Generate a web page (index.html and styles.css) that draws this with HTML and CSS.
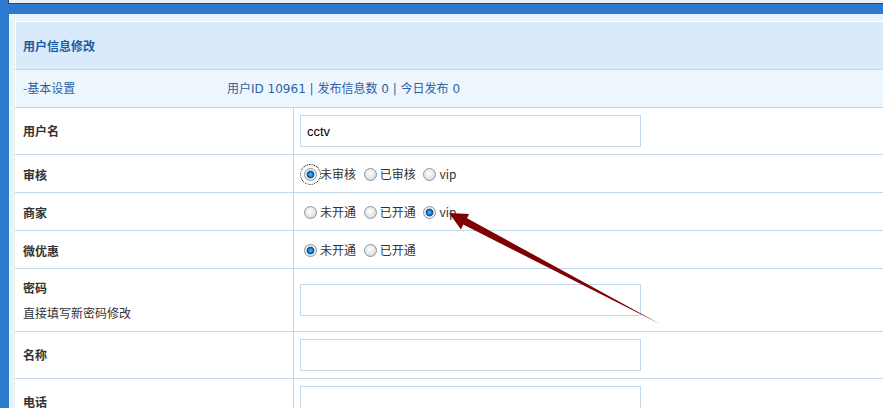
FILE: index.html
```html
<!DOCTYPE html>
<html lang="zh-CN">
<head>
    <meta charset="UTF-8" />
    <title>用户信息修改</title>
    <link rel="stylesheet" href="styles.css">
</head>
<body>
    <div class="topbar"></div>

    <div class="panel">
        <table class="form-table">
            <tr class="title-row">
                <td colspan="2">用户信息修改</td>
            </tr>
            <tr class="sub-row">
                <td colspan="2"><span class="sub-name">-基本设置</span><span class="stats">用户ID 10961 | 发布信息数 0 | 今日发布 0</span></td>
            </tr>
            <tr class="input-row">
                <td class="label">用户名</td>
                <td><input type="text" value="cctv" /></td>
            </tr>
            <tr class="radio-row">
                <td class="label">审核</td>
                <td>
                    <label><input type="radio" name="audit" class="focus" checked />未审核</label>
                    <label><input type="radio" name="audit" />已审核</label>
                    <label><input type="radio" name="audit" />vip</label>
                </td>
            </tr>
            <tr class="radio-row">
                <td class="label">商家</td>
                <td>
                    <label><input type="radio" name="shop" />未开通</label>
                    <label><input type="radio" name="shop" />已开通</label>
                    <label><input type="radio" name="shop" checked />vip</label>
                </td>
            </tr>
            <tr class="radio-row">
                <td class="label">微优惠</td>
                <td>
                    <label><input type="radio" name="coupon" checked />未开通</label>
                    <label><input type="radio" name="coupon" />已开通</label>
                </td>
            </tr>
            <tr class="pass-row">
                <td class="label">
                    <div>密码</div>
                    <div class="hint">直接填写新密码修改</div>
                </td>
                <td><input type="password" /></td>
            </tr>
            <tr class="input-row">
                <td class="label">名称</td>
                <td><input type="text" /></td>
            </tr>
            <tr class="input-row">
                <td class="label">电话</td>
                <td><input type="text" /></td>
            </tr>
        </table>
    </div>

    <!-- annotation arrow drawn over the form -->
    <svg class="arrow" width="883" height="408" viewBox="0 0 883 408">
        <polygon points="449,213 469,214 467,218.2 660,324 463.2,224.6 461,229.5" fill="#7f0000" />
    </svg>
</body>
</html>
```

FILE: styles.css
```css
html, body { margin: 0; height: 100%; overflow: hidden; }
body { background: #2b7acd; font-family: "Noto Sans CJK SC", "Liberation Sans", sans-serif; font-size: 12px; color: #333; position: relative; }

.topbar { height: 3px; margin-left: 8px; background: #eef0f3; border-left: 1px solid #34465a; border-bottom: 1px solid #34465a; }

.panel { margin: 10px 0 0 9px; padding: 7px 0 0 6px; background: #eaf3fc; width: 900px; height: 500px; }

.form-table { width: 890px; border-collapse: collapse; background: #fff; border-top: 1px solid #fff; border-left: 1px solid #fff; }
.form-table td { border-bottom: 1px solid #c4d8ec; padding: 0 0 0 6px; vertical-align: middle; line-height: 16px; }
.form-table td.label { width: 270px; padding-left: 7px; border-right: 1px solid #c4d8ec; font-weight: bold; color: #333; }

.title-row td { height: 47px; background: #d9ebfa; color: #1b5ba2; font-weight: bold; padding-left: 7px; }
.sub-row td { height: 37px; background: #eef6fd; color: #2a63a6; padding-left: 7px; }
.sub-name { display: inline-block; width: 204px; }
.stats { font-family: "DejaVu Sans", "Noto Sans CJK SC", sans-serif; }

.input-row td { height: 46px; }
.radio-row td { height: 34px; padding-top: 3px; }
.pass-row td { height: 62px; }
.pass-row .label div { line-height: 25px; }
.pass-row .label .hint { font-weight: normal; }

input[type="text"], input[type="password"] { box-sizing: border-box; width: 341px; height: 32px; margin: 0; padding: 0 6px; border: 1px solid #c4d8ec; font-family: "Liberation Sans", sans-serif; font-size: 13px; color: #000; outline: none; }

.radio-row label { display: inline-flex; align-items: center; margin-right: 1px; color: #333; }
input[type="radio"] { appearance: none; -webkit-appearance: none; box-sizing: border-box; width: 13px; height: 13px; margin: 0 3px 0 4px; border-radius: 50%; border: 1px solid #8c96a2; background: radial-gradient(circle at 45% 40%, #ffffff 0, #e8e8e8 50%, #c8c8c8 100%); }
input[type="radio"]:checked { background: radial-gradient(circle at 50% 50%, #5cc0f5 0, #1a7fd0 2px, #0b4f8e 3.5px, #f4f4f4 4.3px, #d2d2d2 100%); }
input.focus { outline: 1px dotted #000; outline-offset: 3px; }

.arrow { position: absolute; left: 0; top: 0; pointer-events: none; }
```
